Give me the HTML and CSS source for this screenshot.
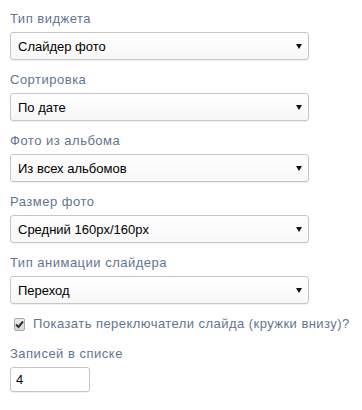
FILE: index.html
```html
<!DOCTYPE html>
<html lang="ru">
<head>
  <meta charset="UTF-8" />
  <title>Настройки виджета</title>
  <link rel="stylesheet" href="styles.css">
</head>
<body>

  <form class="widget-form">
    <div class="field">
      <label class="field-label">Тип виджета</label>
      <div class="select-wrap">
        <select class="select"><option>Слайдер фото</option></select>
        <span class="arrow"></span>
      </div>
    </div>

    <div class="field">
      <label class="field-label">Сортировка</label>
      <div class="select-wrap">
        <select class="select"><option>По дате</option></select>
        <span class="arrow"></span>
      </div>
    </div>

    <div class="field">
      <label class="field-label">Фото из альбома</label>
      <div class="select-wrap">
        <select class="select"><option>Из всех альбомов</option></select>
        <span class="arrow"></span>
      </div>
    </div>

    <div class="field">
      <label class="field-label">Размер фото</label>
      <div class="select-wrap">
        <select class="select"><option>Средний 160px/160px</option></select>
        <span class="arrow"></span>
      </div>
    </div>

    <div class="field">
      <label class="field-label">Тип анимации слайдера</label>
      <div class="select-wrap">
        <select class="select"><option>Переход</option></select>
        <span class="arrow"></span>
      </div>
    </div>

    <!-- Checkbox -->
    <label class="check-row">
      <span class="check-box">
        <svg width="9" height="9" viewBox="0 0 9 9"><path d="M1 4.5 L3.5 7 L8 1.5" fill="none" stroke="#333" stroke-width="2"/></svg>
      </span>
      Показать переключатели слайда (кружки внизу)?
    </label>

    <div class="field">
      <label class="field-label">Записей в списке</label>
      <input class="text-input" type="text" value="4">
    </div>
  </form>

</body>
</html>
```

FILE: styles.css
```css
body {
  font-family: "Liberation Sans", Arial, sans-serif;
  font-size: 13px;
  margin: 0;
  background-color: #fff;
  padding: 10px 10px;
}

.widget-form {
  width: 299px;
}

.field {
  margin-bottom: 11px;
}

.field-label {
  display: block;
  line-height: 18px;
  color: #5f7593;
  letter-spacing: 0.5px;
  margin-bottom: 4px;
}

/* Select */
.select-wrap {
  position: relative;
}

.select {
  display: block;
  width: 100%;
  height: 28px;
  padding: 0 20px 0 7px;
  appearance: none;
  -webkit-appearance: none;
  font-family: "Liberation Sans", Arial, sans-serif;
  font-size: 13px;
  color: #000;
  border: 1px solid #c6c6c6;
  border-radius: 3px;
  background: linear-gradient(#fff, #f7f7f7);
  box-shadow: 0 1px 1px rgba(0,0,0,0.06);
}

.arrow {
  position: absolute;
  right: 7px;
  top: 12px;
  width: 0;
  height: 0;
  border-left: 3px solid transparent;
  border-right: 3px solid transparent;
  border-top: 5px solid #111;
  pointer-events: none;
}

/* Checkbox */
.check-row {
  display: flex;
  align-items: center;
  gap: 8px;
  line-height: 18px;
  color: #5f7593;
  letter-spacing: 0.45px;
  margin: 0 0 12px 4px;
  white-space: nowrap;
}

.check-box {
  width: 11px;
  height: 11px;
  border: 1px solid #a8a8a8;
  border-radius: 2px;
  background: linear-gradient(#ececec, #d6d6d6);
  display: flex;
  align-items: center;
  justify-content: center;
}

/* Text input */
.text-input {
  display: block;
  width: 80px;
  height: 25px;
  box-sizing: border-box;
  padding: 0 5px;
  font-family: "Liberation Sans", Arial, sans-serif;
  font-size: 13px;
  color: #000;
  border: 1px solid #c6c6c6;
  border-radius: 3px;
  box-shadow: 0 1px 1px rgba(0,0,0,0.06);
}
```
